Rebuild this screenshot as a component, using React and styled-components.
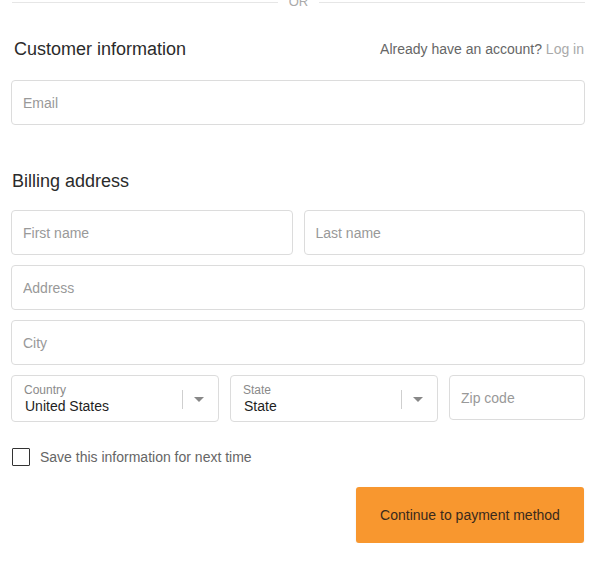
import React from 'react';
import styled, { createGlobalStyle } from 'styled-components';

const GlobalStyle = createGlobalStyle`
  body {
    margin: 0;
    background: #ffffff;
    font-family: "Liberation Sans", Arial, sans-serif;
    overflow: hidden;
  }
`

const Page = styled.div`
  width: 604px;
  box-sizing: border-box;
  padding: 0 19px 0 11px;
`

const Divider = styled.div`
  display: flex;
  align-items: center;
  height: 14px;
  margin: -5px 0 0 1px;
  span {
    padding: 0 11px;
    font-size: 13px;
    line-height: 14px;
    color: #aaa;
  }
  &::before, &::after {
    content: "";
    flex: 1;
    height: 1px;
    background: #e6e6e6;
  }
`

const SectionHead = styled.div`
  display: flex;
  align-items: center;
  justify-content: space-between;
  height: 20px;
  margin: ${p => p.$top}px 0 ${p => p.$bottom}px;
  padding: 0 1px 0 ${p => p.$indent}px;
  h2 {
    margin: 0;
    font-size: 18px;
    font-weight: 400;
    color: #2b2b2b;
  }
`

const Account = styled.div`
  font-size: 14px;
  color: #666;
  a {
    color: #aaa;
    text-decoration: none;
  }
`

const Field = styled.input`
  display: block;
  width: 100%;
  height: 45px;
  box-sizing: border-box;
  padding: 0 11px;
  border: 1px solid #dcdcdc;
  border-radius: 4px;
  font-family: inherit;
  font-size: 14px;
  color: #222;
  outline: none;
  &::placeholder {
    color: #999;
  }
`

const Rows = styled.div`
  display: flex;
  flex-direction: column;
  gap: 10px;
`

const Grid = styled.div`
  display: grid;
  grid-template-columns: ${p => p.$cols};
  gap: 11px;
  align-items: start;
`

const Select = styled.div`
  display: flex;
  align-items: center;
  height: 47px;
  box-sizing: border-box;
  padding: 0 0 0 12px;
  border: 1px solid #dcdcdc;
  border-radius: 4px;
  .text {
    flex: 1;
    min-width: 0;
  }
  label {
    display: block;
    font-size: 12px;
    line-height: 14px;
    color: #8a8a8a;
    margin-top: 1px;
  }
  .value {
    font-size: 14px;
    line-height: 18px;
    color: #1e1e1e;
    padding-left: 1px;
  }
`

const Indicator = styled.div`
  display: flex;
  align-items: center;
  height: 100%;
  &::before {
    content: "";
    width: 1px;
    height: 19px;
    background: #cfcfcf;
    margin-top: 2px;
  }
  &::after {
    content: "";
    margin: 2px 14px 0 11px;
    border-left: 5px solid transparent;
    border-right: 5px solid transparent;
    border-top: 5px solid #888;
  }
`

const CheckRow = styled.label`
  display: flex;
  align-items: center;
  gap: 10px;
  margin: 26px 0 0 1px;
  font-size: 14px;
  color: #666;
  input {
    appearance: none;
    width: 18px;
    height: 18px;
    margin: 0;
    border: 1px solid #333;
    border-radius: 1px;
    background: #fff;
  }
`

const Actions = styled.div`
  display: flex;
  justify-content: flex-end;
  margin: 21px 1px 0 0;
`

const Button = styled.button`
  width: 228px;
  height: 56px;
  border: none;
  border-radius: 3px;
  background: #f8972f;
  box-shadow: 0 1px 2px rgba(0, 0, 0, 0.08);
  font-family: inherit;
  font-size: 14px;
  color: #3a2a1c;
  cursor: pointer;
`

const SelectBox = ({ label, value }) => (
  <Select>
    <div className="text">
      <label>{label}</label>
      <div className="value">{value}</div>
    </div>
    <Indicator />
  </Select>
)

const App = () => {
  return (
    <Page>
      <GlobalStyle />
      <Divider><span>OR</span></Divider>

      <SectionHead $top={30} $bottom={21} $indent={3}>
        <h2>Customer information</h2>
        <Account>Already have an account? <a href="#">Log in</a></Account>
      </SectionHead>
      <Field placeholder="Email" />

      <SectionHead $top={46} $bottom={19} $indent={1}>
        <h2>Billing address</h2>
      </SectionHead>
      <Rows>
        <Grid $cols="1fr 1fr">
          <Field placeholder="First name" />
          <Field placeholder="Last name" />
        </Grid>
        <Field placeholder="Address" />
        <Field placeholder="City" />
        <Grid $cols="208px 208px 1fr">
          <SelectBox label="Country" value="United States" />
          <SelectBox label="State" value="State" />
          <Field placeholder="Zip code" />
        </Grid>
      </Rows>

      <CheckRow>
        <input type="checkbox" />
        Save this information for next time
      </CheckRow>

      <Actions>
        <Button>Continue to payment method</Button>
      </Actions>
    </Page>
  )
};

export default App;
